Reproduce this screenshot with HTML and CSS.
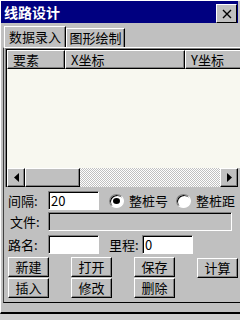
FILE: index.html
```html
<!DOCTYPE html>
<html>
<head>
    <title>线路设计</title>
    <link rel="stylesheet" href="styles.css">
</head>
<body>

<div class="window">

    <!-- TITLE -->
    <div class="titlebar">
        <span class="title">线路设计</span>
        <div class="close">
            <svg width="10" height="10" viewBox="0 0 10 10"><path d="M1 1L9 9M9 1L1 9" stroke="#000" stroke-width="1.4"/></svg>
        </div>
    </div>

    <!-- TABS -->
    <div class="tabs">
        <div class="tab active">数据录入</div>
        <div class="tab">图形绘制</div>
    </div>

    <div class="page">

        <!-- LIST -->
        <div class="list">
            <div class="list-head">
                <div class="col c1">要素</div>
                <div class="col c2">X坐标</div>
                <div class="col c3">Y坐标</div>
            </div>
            <div class="list-body"></div>
            <div class="hscroll">
                <div class="arrow">
                    <svg width="5" height="9" viewBox="0 0 5 9"><path d="M5 0L0 4.5L5 9Z" fill="#000"/></svg>
                </div>
                <div class="thumb"></div>
                <div class="track"></div>
                <div class="arrow">
                    <svg width="5" height="9" viewBox="0 0 5 9"><path d="M0 0L5 4.5L0 9Z" fill="#000"/></svg>
                </div>
            </div>
        </div>

        <!-- FORM -->
        <div class="row r1">
            <span class="label">间隔:</span>
            <div class="field short">20</div>
            <span class="radio checked"></span>
            <span class="radio-text">整桩号</span>
            <span class="radio"></span>
            <span class="radio-text">整桩距</span>
        </div>
        <div class="row r2">
            <span class="label">文件:</span>
            <div class="field long disabled"></div>
        </div>
        <div class="row r3">
            <span class="label">路名:</span>
            <div class="field short"></div>
            <span class="label mid">里程:</span>
            <div class="field short">0</div>
        </div>

        <!-- BUTTONS -->
        <div class="buttons">
            <div class="btn-col">
                <div class="btn">新建</div>
                <div class="btn">插入</div>
            </div>
            <div class="btn-col">
                <div class="btn">打开</div>
                <div class="btn">修改</div>
            </div>
            <div class="btn-col">
                <div class="btn">保存</div>
                <div class="btn">删除</div>
            </div>
            <div class="btn-col calc">
                <div class="btn">计算</div>
            </div>
        </div>

    </div>

</div>

</body>
</html>
```

FILE: styles.css
```css
body {
    margin: 0;
    background: #cfcfcf;
    font-family: "Noto Sans CJK SC", "Liberation Sans", sans-serif;
    font-size: 13px;
    line-height: 17px;
    color: #000;
}

.window {
    width: 240px;
    height: 314px;
    box-sizing: border-box;
    background: #c0c0c0;
    border-top: 1px solid #fff;
    border-left: 1px solid #fff;
    border-bottom: 2px solid #000;
    overflow: hidden;
}

.titlebar {
    height: 22px;
    margin-right: 2px;
    background: #000080;
    display: flex;
    align-items: center;
    justify-content: space-between;
}

.title {
    color: #fff;
    font-weight: bold;
    font-size: 14px;
    padding-left: 3px;
}

.close {
    width: 21px;
    height: 19px;
    margin-top: 3px;
    margin-right: 1px;
    box-sizing: border-box;
    background: #c0c0c0;
    border: 1px solid;
    border-color: #fff #000 #000 #fff;
    display: flex;
    align-items: center;
    justify-content: center;
}

.tabs {
    display: flex;
    align-items: flex-end;
    height: 24px;
    padding-left: 3px;
}

.tab {
    box-sizing: border-box;
    width: 59px;
    height: 19px;
    line-height: 18px;
    text-align: center;
    white-space: nowrap;
    border: 1px solid;
    border-bottom: none;
    border-color: #fff #000 transparent #fff;
    box-shadow: inset -1px 0 #808080;
}

.tab.active {
    width: 62px;
    height: 21px;
    line-height: 20px;
}

.page {
    height: 254px;
    margin-left: 2px;
    border-top: 1px solid #fff;
    border-left: 1px solid #404040;
    border-bottom: 1px solid #000;
}

.list {
    margin-left: 1px;
    width: 240px;
    height: 139px;
    border-top: 1px solid #808080;
    border-left: 1px solid #808080;
    box-shadow: inset 1px 1px #000;
    padding: 1px 0 0 1px;
    box-sizing: border-box;
    display: flex;
    flex-direction: column;
}

.list-head {
    display: flex;
    height: 19px;
}

.col {
    box-sizing: border-box;
    height: 19px;
    line-height: 17px;
    padding-left: 5px;
    white-space: nowrap;
    border: 1px solid;
    border-color: #fff #000 #000 #fff;
    box-shadow: inset -1px -1px #808080;
}

.c1 { width: 58px; }
.c2 { width: 120px; }
.c3 { width: 60px; }

.list-body {
    flex: 1;
    background: #f8f8f0;
}

.hscroll {
    display: flex;
    height: 19px;
    width: 231px;
    background: repeating-conic-gradient(#c0c0c0 0 25%, #fff 0 50%) 0 0 / 2px 2px;
}

.arrow, .thumb {
    box-sizing: border-box;
    height: 19px;
    background: #c0c0c0;
    border: 1px solid;
    border-color: #fff #000 #000 #fff;
    box-shadow: inset -1px -1px #808080;
    display: flex;
    align-items: center;
    justify-content: center;
}

.arrow { width: 18px; }
.thumb { width: 55px; }
.track { flex: 1; }

.row {
    display: flex;
    align-items: center;
    height: 19px;
}

.r1 { margin-top: 4px; }
.r2 { margin-top: 2px; }
.r3 { margin-top: 4px; }

.label {
    width: 40px;
    padding-left: 4px;
    white-space: nowrap;
}

.r2 .label { padding-left: 6px; width: 38px; }

.label.mid {
    width: 33px;
    padding-left: 10px;
}

.field {
    box-sizing: border-box;
    height: 19px;
    line-height: 17px;
    padding-left: 2px;
    background: #fff;
    border: 1px solid;
    border-color: #808080 #fff #fff #808080;
    box-shadow: inset 1px 1px #000;
}

.field.short { width: 51px; }
.field.long { width: 184px; }
.field.disabled { background: #c0c0c0; }

.radio {
    width: 15px;
    height: 14px;
    box-sizing: border-box;
    margin-left: 10px;
    margin-right: 5px;
    border-radius: 50%;
    background: #fff;
    border: 1px solid;
    border-color: #808080 #fff #fff #808080;
    box-shadow: inset 1px 1px #000;
    position: relative;
}

.radio + .radio-text + .radio {
    margin-left: 8px;
}

.radio-text {
    white-space: nowrap;
}

.radio.checked::after {
    content: "";
    position: absolute;
    left: 3px;
    top: 3px;
    width: 7px;
    height: 6px;
    border-radius: 50%;
    background: #000;
}

.buttons {
    display: flex;
    margin-top: 3px;
    padding-left: 4px;
    gap: 22px;
}

.btn-col {
    display: flex;
    flex-direction: column;
    gap: 1px;
}

.calc { margin-top: 1px; }

.btn {
    box-sizing: border-box;
    width: 41px;
    height: 20px;
    line-height: 17px;
    text-align: center;
    border: 1px solid;
    border-color: #fff #000 #000 #fff;
    box-shadow: inset -1px -1px #808080;
}
```
